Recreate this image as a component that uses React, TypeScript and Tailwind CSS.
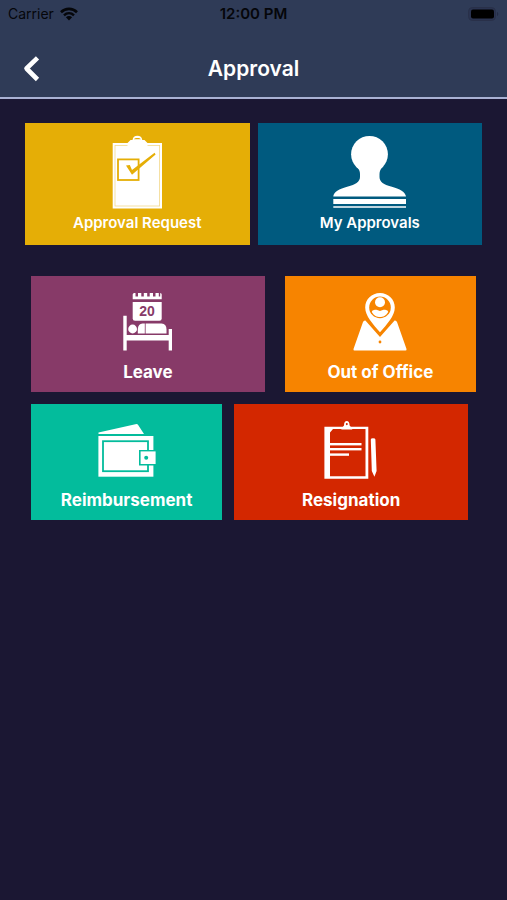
import React from 'react'

function WifiIcon() {
  return (
    <svg width="18" height="14" viewBox="0 0 18 14" fill="none" aria-hidden="true">
      <path d="M1 5.2C5.5 0.8 12.5 0.8 17 5.2" stroke="#05060a" strokeWidth="2.6" />
      <path d="M4 8.4C6.9 5.6 11.1 5.6 14 8.4" stroke="#05060a" strokeWidth="2.4" />
      <path d="M5.9 10.2C7.7 8.6 10.3 8.6 12.1 10.2L9 13.4Z" fill="#05060a" />
    </svg>
  )
}

function BatteryIcon() {
  return (
    <svg width="31" height="14" viewBox="0 0 31 14" aria-hidden="true">
      <rect x="0.5" y="0.5" width="27" height="13" rx="4" fill="#2a3350" stroke="#293049" />
      <rect x="3" y="2.5" width="23" height="9" rx="2" fill="#000" />
      <path d="M29 5C30.6 5.4 30.6 8.6 29 9Z" fill="#242b45" />
    </svg>
  )
}

function BackIcon() {
  return (
    <svg width="18" height="28" viewBox="0 0 18 28" fill="none" aria-hidden="true">
      <path d="M15.5 2.8L4.5 13.5L15.5 24.5" stroke="#fff" strokeWidth="4.6" strokeLinejoin="round" />
    </svg>
  )
}

function RequestIcon() {
  return (
    <svg width="50" height="74" viewBox="0 0 50 74" aria-hidden="true">
      <rect x="0.7" y="8" width="49.3" height="65.5" fill="#fff" />
      <rect x="3" y="10.5" width="44.6" height="60.5" fill="none" stroke="#f3d98c" strokeWidth="0.8" />
      <path d="M15.5 8L18.5 5H20.5C21 1.8 22.5 0.7 25.4 0.7C28.3 0.7 29.8 1.8 30.3 5H32.5L35.5 8V13H15.5Z" fill="#fff" />
      <path d="M22 4.2C22.5 2.6 28.3 2.6 28.8 4.2Z" fill="#e5ae06" />
      <rect x="6" y="24.4" width="20.6" height="20.6" fill="#fff" stroke="#e5ae06" strokeWidth="1.8" />
      <path d="M14 30.6L17.8 30L20 35L42.6 17.8L43.6 19.6L20 39.8Z" fill="#e5ae06" />
    </svg>
  )
}

function StampIcon() {
  return (
    <svg width="74" height="74" viewBox="0 0 74 74" fill="#fff" aria-hidden="true">
      <circle cx="36.5" cy="19.3" r="18.4" />
      <path d="M23 31C26 34 27 36 27 39V42C27 47 22 49.5 15 51.5C6 54 0.5 57 0.3 61.5H73C72.5 57 67 54 58 51.5C51 49.5 46.5 47 46.5 42V39C46.5 36 47.5 34 50.5 31Z" />
      <rect x="0.3" y="64" width="72.7" height="5" />
      <rect x="0.3" y="71" width="72.7" height="2" opacity="0.75" />
    </svg>
  )
}

function LeaveIcon() {
  return (
    <svg width="50" height="60" viewBox="0 0 50 60" fill="#fff" aria-hidden="true">
      <path d="M9.7 2.5Q9.7 1 11.2 1H12.5V4.6H15V1H18.3V4.6H20.8V1H24.2V4.6H26.7V1H30V4.6H32.5V1H35.8V4.6H37.2V1Q38.7 1 38.7 2.5V7.3H9.7Z" />
      <path d="M9.7 10H38.7V26.5Q38.7 28.7 36.5 28.7H12Q9.7 28.7 9.7 26.5Z" />
      <text
        x="24"
        y="24"
        textAnchor="middle"
        fill="#873a68"
        className="font-['Liberation_Sans',sans-serif] text-[14px] font-bold"
      >
        20
      </text>
      <path d="M0.3 23.7H3.7V43H45.7V37H49V58.5H45.7V48.5H3.7V58.5H0.3Z" />
      <circle cx="9.6" cy="37" r="4.4" />
      <path d="M19.5 31.6H21.8V41.6H14.8V37C15.3 33.5 16.5 31.8 19.5 31.6Z" />
      <path d="M22.6 31.6H38.5C42 32 43.5 34 43.5 37.5V41.6H22.6Z" />
    </svg>
  )
}

function OfficeIcon() {
  return (
    <svg width="54" height="60" viewBox="0 0 54 60" fill="#fff" aria-hidden="true">
      <path d="M12.4 28.5L27 45L41.6 28.5Q43.2 28.2 44 30L53.5 57Q53.8 58.5 52.5 58.5H1.5Q0.2 58.5 0.5 57L10 30Q10.8 28.2 12.4 28.5Z" />
      <path d="M27 1C35.3 1 41.8 7.5 41.8 15.4C41.8 24 34 32 27 40.2C20 32 12.2 24 12.2 15.4C12.2 7.5 18.7 1 27 1Z" />
      <circle cx="27" cy="15.4" r="10.8" fill="#f78400" />
      <circle cx="27" cy="10.3" r="5" />
      <path d="M18.8 20C19 18.2 21 17.8 23.5 17.8L27 19L30.5 17.8C33 17.8 35 18.2 35.2 20C33 24 30 25 27 25C24 25 21 24 18.8 20Z" />
      <circle cx="27" cy="50" r="1.4" fill="#f78400" />
    </svg>
  )
}

function WalletIcon() {
  return (
    <svg width="58" height="60" viewBox="0 0 58 60" fill="#fff" aria-hidden="true">
      <path d="M0.5 14V12.6L38.5 4Q39.5 4 40 4.8L46 14Z" />
      <rect x="0.4" y="16" width="55" height="40.7" />
      <rect x="5" y="21.2" width="45" height="30" fill="none" stroke="#03bc9c" strokeWidth="1.8" />
      <rect x="41" y="30" width="17" height="15.5" fill="#03bc9c" />
      <rect x="42.6" y="31.4" width="15" height="12.6" />
      <circle cx="48.2" cy="37.7" r="2" fill="#03bc9c" />
    </svg>
  )
}

function ResignIcon() {
  return (
    <svg width="54" height="60" viewBox="0 0 54 60" fill="#fff" aria-hidden="true">
      <path
        fillRule="evenodd"
        d="M0.4 6.7H44.3V58.7H0.4ZM9 9L6 12.6V56.2H41.5V9Z"
      />
      <path
        fillRule="evenodd"
        d="M17.4 8.5L20 5.4C20 2.5 21.2 1 22.8 1C24.4 1 25.6 2.5 25.6 5.4L28.2 8.5V9.5H17.4ZM22.8 3A1 1.1 0 1 0 22.8 5.2A1 1.1 0 1 0 22.8 3Z"
      />
      <rect x="6" y="23" width="31.5" height="2.4" />
      <rect x="6" y="28" width="31.5" height="2.4" />
      <rect x="6" y="33.4" width="19" height="2.4" />
      <path d="M46.8 19.5Q46.8 18.3 49 18.3Q51.4 18.3 51.4 19.5L52.6 51L50.4 56.8L47.8 51Z" />
    </svg>
  )
}

type TileProps = {
  label: string
  color: string
  icon: React.ReactNode
}

function TopTile({ label, color, icon }: TileProps) {
  return (
    <button type="button" className={`flex flex-col items-center pt-3 pb-3 gap-1 cursor-pointer ${color}`}>
      {icon}
      <span className="text-[15px] leading-5 font-semibold">{label}</span>
    </button>
  )
}

function Tile({ label, color, icon }: TileProps) {
  return (
    <button type="button" className={`flex flex-col items-center pt-4 pb-2 gap-2 cursor-pointer ${color}`}>
      {icon}
      <span className="text-[17px] leading-6 font-bold">{label}</span>
    </button>
  )
}

function App() {
  return (
    <div className="min-h-screen bg-[#1b1733] font-['Inter',sans-serif] text-white">
      <header className="bg-[#2f3b57] border-b-2 border-[#a9b1d3]">
        <div className="grid grid-cols-[1fr_auto_1fr] items-center h-7 px-2 text-[#05060a]">
          <div className="flex items-center gap-1.5 text-sm">
            <span>Carrier</span>
            <WifiIcon />
          </div>
          <span className="text-[15px] font-semibold">12:00 PM</span>
          <div className="flex justify-end">
            <BatteryIcon />
          </div>
        </div>
        <div className="grid grid-cols-[1fr_auto_1fr] items-center mt-3 h-[57px] px-[22px]">
          <button type="button" aria-label="Back" className="justify-self-start cursor-pointer">
            <BackIcon />
          </button>
          <h1 className="text-[21px] font-semibold">Approval</h1>
        </div>
      </header>

      <main className="pt-6">
        <section className="grid grid-cols-2 gap-2 px-[25px]">
          <TopTile label="Approval Request" color="bg-[#e5ae06]" icon={<RequestIcon />} />
          <TopTile label="My Approvals" color="bg-[#005a7f]" icon={<StampIcon />} />
        </section>

        <section className="flex flex-col gap-3 mt-[31px] px-[31px]">
          <div className="grid grid-cols-[11fr_9fr] gap-5">
            <Tile label="Leave" color="bg-[#873a68]" icon={<LeaveIcon />} />
            <Tile label="Out of Office" color="bg-[#f78400]" icon={<OfficeIcon />} />
          </div>
          <div className="grid grid-cols-[9fr_11fr] gap-3 pr-2">
            <Tile label="Reimbursement" color="bg-[#03bc9c]" icon={<WalletIcon />} />
            <Tile label="Resignation" color="bg-[#d32700]" icon={<ResignIcon />} />
          </div>
        </section>
      </main>
    </div>
  )
}

export default App
